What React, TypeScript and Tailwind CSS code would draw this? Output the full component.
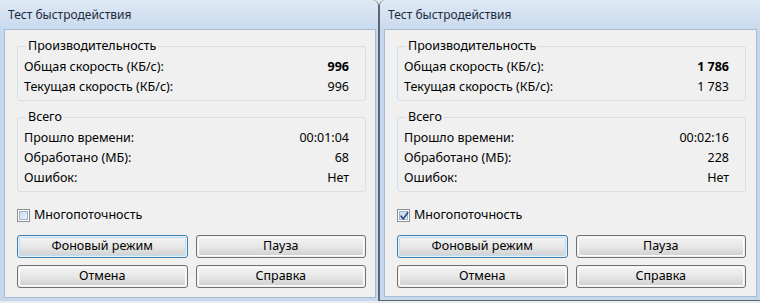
import React from "react";

type Row = { label: string; value: string; bold?: boolean };

interface WindowProps {
  speed: Row[];
  total: Row[];
  checked: boolean;
  side: "left" | "right";
}

const font = { fontFamily: '"Noto Sans", "Open Sans", "Liberation Sans", sans-serif' };

function Group({ title, rows }: { title: string; rows: Row[] }) {
  return (
    <fieldset className="border border-[#d5dfe5] rounded-[3px] px-[6px] pt-[3px] pb-[3px] pr-[16px]">
      <legend className="ml-[2px] px-[2px] h-[16px] leading-[16px] text-black">{title}</legend>
      {rows.map((r) => (
        <div key={r.label} className="flex h-[20px] items-center justify-between text-black">
          <span>{r.label}</span>
          <span className={r.bold ? "font-bold" : ""}>{r.value}</span>
        </div>
      ))}
    </fieldset>
  );
}

function Checkbox({ checked }: { checked: boolean }) {
  return (
    <div className="w-[13px] h-[13px] border border-[#8e8f8f] bg-white p-[1px]">
      <div className="relative w-full h-full border border-[#9fb3cc] bg-gradient-to-br from-[#c9d9ec] to-[#eef3f9]">
        {checked && (
          <svg className="absolute -left-[2px] -top-[2px]" width="13" height="13" viewBox="0 0 13 13">
            <path d="M3.2 6.3 L5.4 8.8 L9.6 2.8" fill="none" stroke="#3b4f86" strokeWidth="1.8" strokeLinecap="round" strokeLinejoin="round" />
          </svg>
        )}
      </div>
    </div>
  );
}

function Button({ children, primary }: { children: React.ReactNode; primary?: boolean }) {
  return (
    <div
      className={`h-[23px] rounded-[3px] border ${
        primary ? "border-[#3c7fb1]" : "border-[#707070]"
      } p-[1px]`}
    >
      <div
        className={`h-full rounded-[2px] border ${
          primary ? "border-[#b9e0f5]" : "border-[#fcfcfc]"
        } bg-gradient-to-b from-[#f2f2f2] via-[#e7e7e7] to-[#d2d2d2] flex items-center justify-center text-black`}
      >
        {children}
      </div>
    </div>
  );
}

function Win({ speed, total, checked, side }: WindowProps) {
  const left = side === "left";
  return (
    <div
      className={`flex flex-col h-[301px] bg-[#c6d8ee] ${
        left
          ? "w-[379px] border-r border-[#5c6670] rounded-tr-[6px]"
          : "w-[381px] border-l border-b border-[#5c6670] rounded-tl-[6px]"
      }`}
    >
      <div
        className={`h-[29px] shrink-0 flex items-center bg-gradient-to-b from-[#dfe9f5] to-[#c9daee] text-[12px] text-[#1b2a3c] ${
          left ? "pl-[8px] rounded-tr-[6px]" : "pl-[8px] rounded-tl-[6px]"
        }`}
      >
        Тест быстродействия
      </div>
      <div
        className={`flex-1 bg-[#f0f0f0] border border-[#a8bad0] mb-[3px] pt-[8px] pl-[12px] ${
          left ? "ml-[4px] mr-[2px] pr-[9px]" : "ml-[4px] mr-[3px] pr-[10px]"
        }`}
      >
        <Group title="Производительность" rows={speed} />
        <div className="mt-[8px]">
          <Group title="Всего" rows={total} />
        </div>
        <div className="mt-[15px] h-[16px] flex items-center gap-[4px] text-black">
          <Checkbox checked={checked} />
          <span>Многопоточность</span>
        </div>
        <div className="mt-[12px] grid grid-cols-2 gap-x-[8px] gap-y-[7px]">
          <Button primary>Фоновый режим</Button>
          <Button>Пауза</Button>
          <Button>Отмена</Button>
          <Button>Справка</Button>
        </div>
      </div>
    </div>
  );
}

export default function App() {
  return (
    <div className="w-[760px] h-[303px] flex bg-[#e9ecef] text-[12.5px] overflow-hidden" style={font}>
      <Win
        side="left"
        checked={false}
        speed={[
          { label: "Общая скорость (КБ/с):", value: "996", bold: true },
          { label: "Текущая скорость (КБ/с):", value: "996" },
        ]}
        total={[
          { label: "Прошло времени:", value: "00:01:04" },
          { label: "Обработано (МБ):", value: "68" },
          { label: "Ошибок:", value: "Нет" },
        ]}
      />
      <Win
        side="right"
        checked={true}
        speed={[
          { label: "Общая скорость (КБ/с):", value: "1 786", bold: true },
          { label: "Текущая скорость (КБ/с):", value: "1 783" },
        ]}
        total={[
          { label: "Прошло времени:", value: "00:02:16" },
          { label: "Обработано (МБ):", value: "228" },
          { label: "Ошибок:", value: "Нет" },
        ]}
      />
    </div>
  );
}
